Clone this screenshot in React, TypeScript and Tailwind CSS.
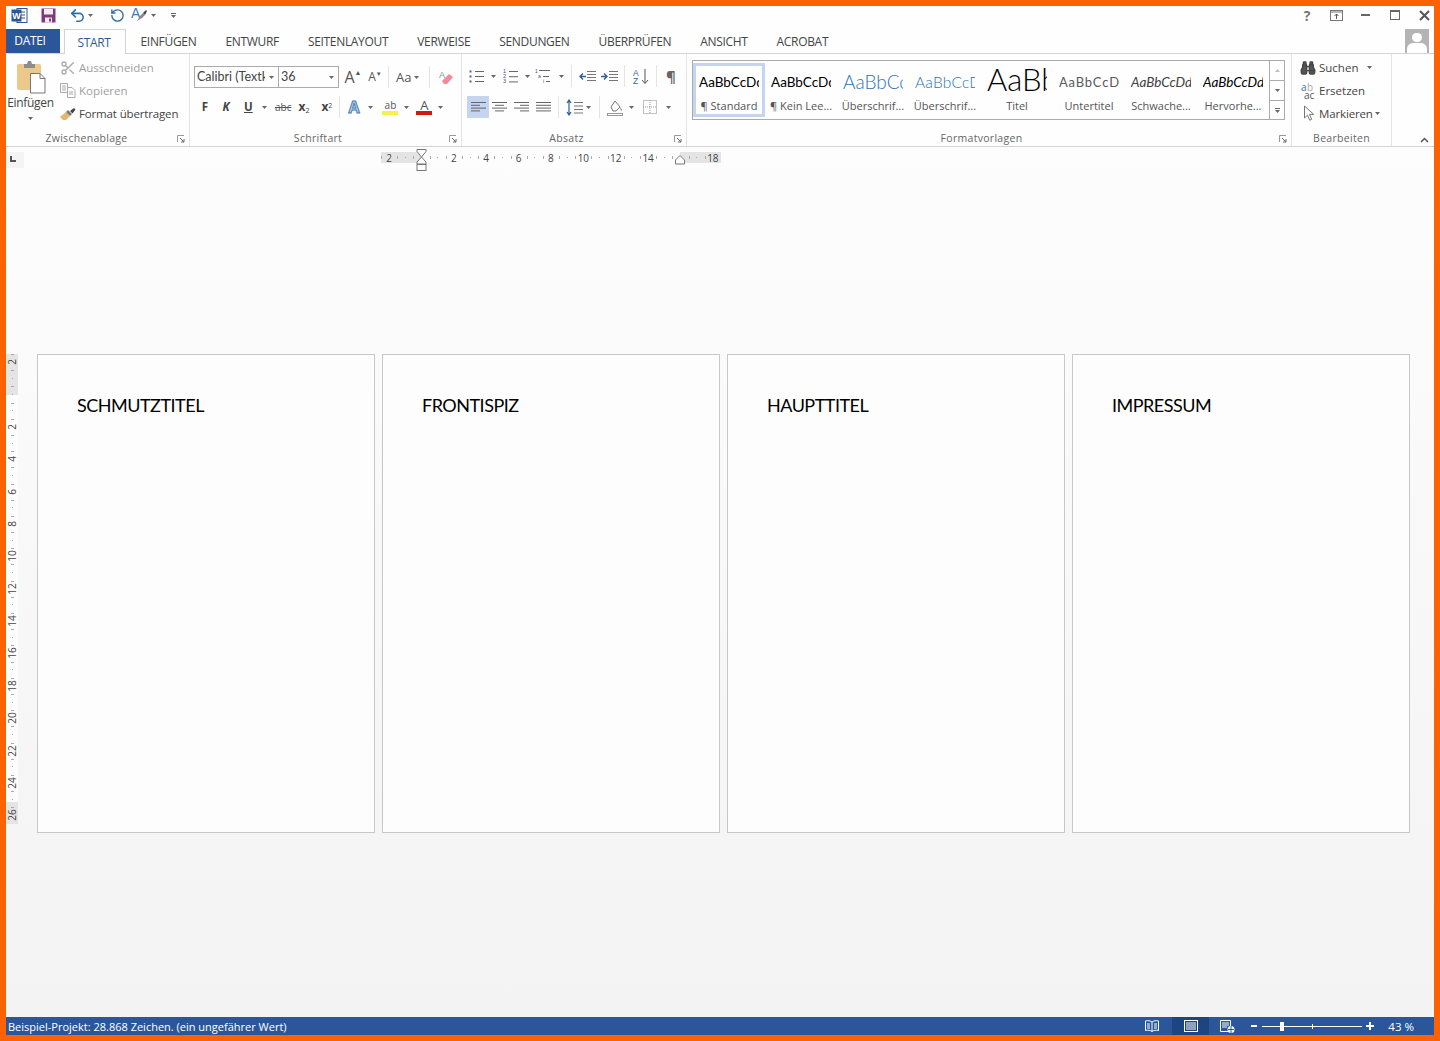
import type { ReactNode } from 'react';
import { Binoculars, RotateCw, Scissors, Undo2 } from 'lucide-react';

function Caret({ className = '' }: { className?: string }) {
  return (
    <svg width="5" height="3" viewBox="0 0 5 3" className={`shrink-0 ${className}`}>
      <path d="M0 0h5L2.5 3z" fill="#666" />
    </svg>
  );
}

function Divider({ className = '' }: { className?: string }) {
  return <div className={`h-[22px] w-px shrink-0 bg-[#e4e4e4] ${className}`} />;
}

function Launcher() {
  return (
    <svg width="8" height="8" viewBox="0 0 8 8" className="shrink-0">
      <path d="M0.5 7V0.5H7" fill="none" stroke="#999" />
      <path d="M3 3l4 4M7 4v3H4" fill="none" stroke="#666" />
    </svg>
  );
}

function Lines({ rows }: { rows: [number, number][] }) {
  return (
    <svg width="15" height="13" viewBox="0 0 15 13" className="shrink-0">
      {rows.map(([x, w], i) => (
        <rect key={i} x={x} y={1 + i * 2.8} width={w} height="1" fill="#666" />
      ))}
    </svg>
  );
}

function WordLogo() {
  return (
    <svg width="17" height="17" viewBox="0 0 17 17">
      <rect x="6" y="1.5" width="10" height="14" fill="#fff" stroke="#2b579a" />
      <path d="M9 5h5M9 8h5M9 11h5" stroke="#2b579a" />
      <rect x="0.5" y="2.5" width="10" height="12" fill="#2b579a" />
      <text x="5.5" y="12" textAnchor="middle" fontSize="9" fontWeight="700" fill="#fff" fontFamily="Liberation Sans, sans-serif">W</text>
    </svg>
  );
}

function SaveIcon() {
  return (
    <svg width="15" height="15" viewBox="0 0 15 15">
      <rect x="0.5" y="0.5" width="14" height="14" fill="#80397b" />
      <rect x="3" y="1" width="9" height="5.5" fill="#f4eef4" />
      <rect x="4" y="9.5" width="7" height="5" fill="#f4eef4" />
      <rect x="8" y="10.5" width="2" height="3" fill="#80397b" />
    </svg>
  );
}

function FormatPainterQat() {
  return (
    <svg width="17" height="18" viewBox="0 0 17 18">
      <text x="0" y="12" fontSize="14" fill="#3f7cb8" fontFamily="Liberation Sans, sans-serif">A</text>
      <path d="M6 15l3-5 3-3 2 2-3 3z" fill="#8a8a8a" />
      <path d="M12 7l3-3 1 1-2 4z" fill="#444" />
    </svg>
  );
}

function RestoreRibbon() {
  return (
    <svg width="13" height="11" viewBox="0 0 13 11">
      <rect x=".5" y=".5" width="12" height="10" fill="none" stroke="#777" />
      <path d="M1 2h11" stroke="#777" />
      <path d="M6.500 9V4M4.500 6l2-2 2 2" fill="none" stroke="#555" />
    </svg>
  );
}

function PasteIcon() {
  return (
    <svg width="30" height="34" viewBox="0 0 30 34">
      <path d="M1 6a2 2 0 0 1 2-2h20a2 2 0 0 1 2 2v24H3a2 2 0 0 1-2-2z" fill="#ebc98a" />
      <path d="M8 4h3l1-3h3l1 3h3v4H8z" fill="#8c8c8c" />
      <path d="M14.5 13.5H24l5 5v14.5H14.5z" fill="#fff" stroke="#777" />
      <path d="M24 13.5v5h5" fill="none" stroke="#777" />
    </svg>
  );
}

function CopyIcon() {
  return (
    <svg width="16" height="15" viewBox="0 0 16 15">
      <path d="M0.5 0.5h7v9h-7zM2 3h4M2 5h4M2 7h4" fill="#fff" stroke="#aaa" />
      <path d="M7.5 4.5H12l3 3v7H7.5zM9 9h4M9 11h4" fill="#fff" stroke="#aaa" />
    </svg>
  );
}

function BrushIcon() {
  return (
    <svg width="16" height="14" viewBox="0 0 16 14">
      <path d="M0 10l6-5 4 4-4 4H3z" fill="#e3b868" />
      <path d="M6 5l2-2 4 4-2 2z" fill="#777" />
      <path d="M10 4l4-3 1.5 1.5-3 4z" fill="#444" />
    </svg>
  );
}

function EraserIcon() {
  return (
    <svg width="16" height="16" viewBox="0 0 16 16">
      <text x="1" y="9" fontSize="9" fill="#7a8fb0" fontFamily="Liberation Sans, sans-serif">A</text>
      <path d="M4 12l7-7 4 3-6 7H6z" fill="#f08a9c" />
    </svg>
  );
}

function BulletsIcon() {
  return (
    <svg width="15" height="15" viewBox="0 0 15 15">
      {[2, 7, 12].map((y) => (
        <g key={y}>
          <rect x="0.5" y={y - 0.5} width="2" height="2" fill="#4a648f" />
          <rect x="6" y={y} width="9" height="1" fill="#666" />
        </g>
      ))}
    </svg>
  );
}

function NumberedIcon() {
  return (
    <svg width="16" height="16" viewBox="0 0 16 16">
      {['1', '2', '3'].map((n, i) => (
        <g key={n}>
          <text x="0" y={5 + i * 5.2} fontSize="5.5" fill="#39537f" fontFamily="Liberation Sans, sans-serif">{n}</text>
          <rect x="6" y={3 + i * 5.2} width="9" height="1" fill="#666" />
        </g>
      ))}
    </svg>
  );
}

function MultiIcon() {
  return (
    <svg width="16" height="16" viewBox="0 0 16 16">
      <text x="0" y="5" fontSize="5" fill="#39537f" fontFamily="Liberation Sans, sans-serif">1</text>
      <rect x="4" y="2" width="11" height="1" fill="#666" />
      <text x="3" y="10" fontSize="5" fill="#39537f" fontFamily="Liberation Sans, sans-serif">a</text>
      <rect x="8" y="8" width="6" height="1" fill="#666" />
      <text x="8" y="15" fontSize="5" fill="#39537f" fontFamily="Liberation Sans, sans-serif">i</text>
      <rect x="11" y="13" width="4" height="1" fill="#666" />
    </svg>
  );
}

function IndentIcon({ flip = false }: { flip?: boolean }) {
  return (
    <svg width="17" height="11" viewBox="0 0 17 11">
      <path d="M8 0.5h9M8 3.5h9M8 6.5h9M8 9.5h9" stroke="#777" />
      {flip ? (
        <path d="M0 5.5h5M3 2.5l3 3-3 3" fill="none" stroke="#2b5f9a" strokeWidth="1.4" />
      ) : (
        <path d="M7 5.5H1M4 2.5l-3 3 3 3" fill="none" stroke="#2b5f9a" strokeWidth="1.4" />
      )}
    </svg>
  );
}

function SortIcon() {
  return (
    <svg width="16" height="17" viewBox="0 0 16 17">
      <text x="0" y="7.5" fontSize="8.5" fill="#39649c" fontFamily="Liberation Sans, sans-serif">A</text>
      <text x="0" y="16" fontSize="8.5" fill="#39649c" fontFamily="Liberation Sans, sans-serif">Z</text>
      <path d="M12 1v14M9 12l3 3.5 3-3.5" fill="none" stroke="#555" />
    </svg>
  );
}

function LineSpacingIcon() {
  return (
    <svg width="17" height="17" viewBox="0 0 17 17">
      <path d="M3 1v15M1 4l2-3 2 3M1 13l2 3 2-3" fill="none" stroke="#2b5f9a" strokeWidth="1.2" />
      <path d="M8 3.5h9M8 7h9M8 10.5h9M8 14h9" stroke="#777" />
    </svg>
  );
}

function ShadingIcon() {
  return (
    <svg width="17" height="17" viewBox="0 0 17 17">
      <path d="M4 8l4-6 5 6-4 4H6z" fill="#fff" stroke="#777" />
      <path d="M13 8l2 3-1 1z" fill="#2b7cb8" />
      <rect x="0.5" y="14.5" width="15" height="2" fill="#fff" stroke="#999" />
    </svg>
  );
}

function BordersIcon() {
  return (
    <svg width="14" height="14" viewBox="0 0 14 14">
      <rect x="0.5" y="0.5" width="13" height="13" fill="none" stroke="#888" strokeDasharray="1 1" />
      <path d="M7 0v14M0 7h14" stroke="#999" strokeDasharray="1 1" />
    </svg>
  );
}

function ReplaceIcon() {
  return (
    <svg width="16" height="16" viewBox="0 0 16 16" fontFamily="Open Sans, sans-serif" fontSize="10">
      <text x="1" y="8" fill="#3d6fa8">a</text>
      <text x="7" y="8" fill="#aaa">b</text>
      <text x="4" y="16" fill="#555">ac</text>
    </svg>
  );
}

function SelectIcon() {
  return (
    <svg width="13" height="17" viewBox="0 0 13 17">
      <path d="M1.500 1v12l3-2.800 2.200 5 2-.9-2.200-4.900h4.200z" fill="#fff" stroke="#777" />
    </svg>
  );
}

function RulerMarkers() {
  return (
    <svg width="12" height="23" viewBox="0 0 12 23" className="absolute top-[-3px] left-[35px]">
      <path d="M1 .5h9v2L5.5 8 1 2.5z" fill="#fff" stroke="#777" />
      <path d="M5.5 8L10 13v2H1v-2z" fill="#fff" stroke="#777" />
      <rect x="1" y="15.5" width="9" height="6" fill="#fff" stroke="#777" />
    </svg>
  );
}

function RightIndent() {
  return (
    <svg width="10" height="10" viewBox="0 0 10 10" className="absolute top-[3px] left-[294px]">
      <path d="M.5 5L5 .5 9.5 5v4h-9z" fill="#fff" stroke="#777" />
    </svg>
  );
}

const hCells = [-2, -1, 0, 1, 2, 3, 4, 5, 6, 7, 8, 9, 10, 11, 12, 13, 14, 15, 16, 17, 18];
const vCells = Array.from({ length: 29 }, (_, i) => i - 2);

function HorizontalRuler() {
  return (
    <div className="relative ml-[357px] flex h-[11px] w-[340px] bg-[linear-gradient(to_right,#e4e4e4_40px,#fdfdfd_40px,#fdfdfd_299px,#e4e4e4_299px)]">
      {hCells.map((n) => (
        <div key={n} className="flex h-full w-[16.2px] items-center justify-between">
          <span className="h-[3px] w-px bg-[#aaa]" />
          {n % 2 === 0 && n !== 0 && n !== 16 ? (
            <span className="text-[10px] leading-none text-[#444]">{Math.abs(n)}</span>
          ) : (
            <span className="h-[1px] w-px bg-[#aaa]" />
          )}
          <span className="w-px" />
        </div>
      ))}
      <RulerMarkers />
      <RightIndent />
    </div>
  );
}

function VerticalRuler() {
  return (
    <div className="flex h-[470px] w-[12px] shrink-0 flex-col bg-[linear-gradient(to_bottom,#e4e4e4_41px,#fdfdfd_41px,#fdfdfd_448px,#e4e4e4_448px)]">
      {vCells.map((n) => (
        <div key={n} className="flex h-[16.2px] w-full flex-col items-center justify-between">
          <span className="h-px w-[3px] bg-[#aaa]" />
          {n % 2 === 0 && n !== 0 ? (
            <span className="-rotate-90 text-[10px] leading-none text-[#444]">{Math.abs(n)}</span>
          ) : (
            <span className="h-px w-px bg-[#aaa]" />
          )}
          <span className="h-px" />
        </div>
      ))}
    </div>
  );
}

function Page({ title }: { title: string }) {
  return (
    <div className="h-[479px] w-[338px] shrink-0 border border-[#c8c8c8] bg-[#fdfdfd] pt-[38px] pl-[39px]">
      <p className="font-['Lato',sans-serif] text-[18px] leading-[24px] tracking-[-0.5px] text-black">{title}</p>
    </div>
  );
}

function StyleItem({
  label,
  selected = false,
  children,
}: {
  label: string;
  selected?: boolean;
  children: ReactNode;
}) {
  return (
    <div
      className={`flex h-[54px] w-[72px] shrink-0 flex-col items-center ${
        selected ? 'border-[3px] border-[#c5d4ef]' : 'border-[3px] border-transparent'
      }`}
    >
      <div className="flex h-[33px] w-[60px] items-center overflow-hidden whitespace-nowrap font-['Lato',sans-serif]">
        {children}
      </div>
      <span className="text-[11px] leading-[14px] whitespace-nowrap text-[#555]">{label}</span>
    </div>
  );
}

function GroupLabel({
  children,
  launcher = true,
  className = '',
  textClass = '',
}: {
  children: ReactNode;
  launcher?: boolean;
  className?: string;
  textClass?: string;
}) {
  return (
    <div className={`mt-[1px] flex h-[15px] items-center text-[10.5px] tracking-[0.3px] text-[#666] ${className}`}>
      <span className={`flex-1 text-center ${textClass}`}>{children}</span>
      {launcher && <Launcher />}
    </div>
  );
}

const tabs = ['EINFÜGEN', 'ENTWURF', 'SEITENLAYOUT', 'VERWEISE', 'SENDUNGEN', 'ÜBERPRÜFEN', 'ANSICHT', 'ACROBAT'];

export default function App() {
  return (
    <div className="flex h-[1041px] w-[1440px] flex-col overflow-hidden bg-[#fd6200] p-[6px] font-['Open_Sans',sans-serif]">
      {/* title bar */}
      <div className="flex h-[22px] shrink-0 items-center bg-[#fefefe] pb-[4px] pl-[5px]">
        <WordLogo />
        <div className="ml-[13px]"><SaveIcon /></div>
        <Undo2 size={17} strokeWidth={2.2} className="ml-[13px] text-[#2f6ea5]" />
        <Caret className="ml-[2px]" />
        <RotateCw size={15} strokeWidth={2.2} className="ml-[17px] -scale-x-100 text-[#2f6ea5]" />
        <div className="ml-[6px]"><FormatPainterQat /></div>
        <Caret className="ml-[3px]" />
        <div className="ml-[15px] flex flex-col items-center gap-[1px]">
          <span className="h-px w-[5px] bg-[#666]" />
          <Caret />
        </div>
        <div className="ml-auto flex items-center pr-[4px]">
          <span className="w-[20px] text-center text-[14px] font-bold text-[#777]">?</span>
          <div className="ml-[13px]"><RestoreRibbon /></div>
          <div className="ml-[18px] h-[2px] w-[9px] bg-[#666]" />
          <div className="ml-[20px] h-[10px] w-[10px] border border-t-2 border-[#666]" />
          <svg width="11" height="11" viewBox="0 0 11 11" className="ml-[19px]">
            <path d="M1 1l9 9M10 1l-9 9" stroke="#555" strokeWidth="2" />
          </svg>
        </div>
      </div>

      {/* tabs */}
      <div className="flex h-[26px] shrink-0 items-stretch border-b border-[#d4d4d4] bg-[#fefefe] text-[12px] tracking-[-0.32px] text-[#444]">
        <div className="mt-[1px] flex w-[54px] items-center justify-center bg-[#2b579a] pr-[6px] text-white">DATEI</div>
        <div className="mt-[1px] mb-[-1px] ml-[4px] flex w-[62px] items-center justify-center border-x border-t border-[#d4d4d4] bg-[#fefefe] pt-[1px] pr-[2px] text-[#35588f]">START</div>
        {tabs.map((t) => (
          <div key={t} className="flex items-center px-[14.5px] pt-[2px]">{t}</div>
        ))}
        <div className="mt-[1px] mr-[5px] ml-auto flex h-[24px] w-[24px] flex-col items-center overflow-hidden bg-[#b4b4b4]">
          <span className="mt-[4px] h-[10px] w-[10px] rounded-full bg-white" />
          <span className="mt-[1px] h-[12px] w-[20px] rounded-t-[6px] bg-white" />
        </div>
      </div>

      {/* ribbon */}
      <div className="flex h-[93px] shrink-0 border-b border-[#d4d4d4] bg-[#fefefe] text-[11.5px] text-[#444]">
        {/* Zwischenablage */}
        <div className="flex w-[184px] shrink-0 flex-col border-r border-[#e4e4e4]">
          <div className="flex h-[77px]">
            <div className="flex w-[49px] flex-col items-center pt-[6px]">
              <PasteIcon />
              <span className="text-[12px] leading-[18px] tracking-[-0.3px]">Einfügen</span>
              <Caret className="mt-[5px]" />
            </div>
            <div className="ml-[5px] flex flex-col pt-[2px]">
              <div className="flex h-[23px] items-center gap-[3px] text-[#a0a0a0]">
                <Scissors size={16} className="text-[#aaa]" />
                <span>Ausschneiden</span>
              </div>
              <div className="flex h-[23px] items-center gap-[3px] text-[#a0a0a0]">
                <CopyIcon />
                <span>Kopieren</span>
              </div>
              <div className="flex h-[23px] items-center gap-[3px] tracking-[-0.15px] whitespace-nowrap">
                <BrushIcon />
                <span>Format übertragen</span>
              </div>
            </div>
          </div>
          <GroupLabel className="pr-[4px]" textClass="pr-[10px]">Zwischenablage</GroupLabel>
        </div>

        {/* Schriftart */}
        <div className="flex w-[272px] shrink-0 flex-col border-r border-[#e4e4e4]">
          <div className="flex h-[77px] flex-col pl-[4px]">
            <div className="mt-[12px] flex h-[22px] items-center">
              <div className="flex h-[22px] w-[85px] items-center border border-[#ababab] pl-[2px]">
                <span className="w-[68px] overflow-hidden font-['Lato',sans-serif] text-[12.5px] whitespace-nowrap">Calibri (Textkörper)</span>
                <Caret className="ml-[4px]" />
              </div>
              <div className="ml-[-1px] flex h-[22px] w-[61px] items-center border border-[#ababab] pl-[2px]">
                <span className="flex-1 font-['Lato',sans-serif] text-[12.5px]">36</span>
                <Caret className="mr-[4px]" />
              </div>
              <span className="ml-[4px] flex w-[20px] items-start justify-center text-[16px] leading-none text-[#555]">A<span className="text-[7px]">▲</span></span>
              <span className="ml-[2px] flex w-[20px] items-start justify-center text-[12px] leading-none text-[#555]">A<span className="text-[6px]">▼</span></span>
              <Divider className="ml-[3px]" />
              <span className="ml-[7px] text-[13px] leading-none text-[#555]">Aa</span>
              <Caret className="ml-[3px]" />
              <Divider className="ml-[10px]" />
              <div className="ml-[8px]"><EraserIcon /></div>
            </div>
            <div className="mt-[8px] flex h-[22px] items-center text-[#444]">
              <span className="ml-[7px] w-[8px] text-center text-[11.5px] font-bold">F</span>
              <span className="ml-[13px] w-[8px] text-center text-[11.5px] font-bold italic">K</span>
              <span className="ml-[14px] w-[8px] text-center text-[11.5px] font-bold underline">U</span>
              <Caret className="ml-[10px]" />
              <span className="ml-[8px] text-[10px] text-[#555] line-through">abc</span>
              <span className="ml-[7px] text-[12px] font-bold">x<sub className="text-[7px] font-normal">2</sub></span>
              <span className="ml-[12px] text-[12px] font-bold">x<sup className="text-[7px] font-normal">2</sup></span>
              <Divider className="ml-[7px]" />
              <span className="ml-[8px] text-[16px] leading-none font-bold text-[#b9d3ee] [-webkit-text-stroke:1px_#4a7fb5]">A</span>
              <Caret className="ml-[9px]" />
              <div className="ml-[9px] flex w-[16px] flex-col items-center">
                <span className="text-[10px] leading-[11px] text-[#555]">ab</span>
                <span className="h-[4px] w-[16px] bg-[#f7ef4a]" />
              </div>
              <Caret className="ml-[6px]" />
              <div className="ml-[7px] flex w-[16px] flex-col items-center">
                <span className="text-[13px] leading-[12px] text-[#555]">A</span>
                <span className="h-[4px] w-[16px] bg-[#d01818]" />
              </div>
              <Caret className="ml-[6px]" />
            </div>
          </div>
          <GroupLabel className="pr-[4px]" textClass="pr-[3px]">Schriftart</GroupLabel>
        </div>

        {/* Absatz */}
        <div className="flex w-[225px] shrink-0 flex-col border-r border-[#e4e4e4]">
          <div className="flex h-[77px] flex-col pl-[4px]">
            <div className="mt-[11px] flex h-[22px] items-center">
              <div className="ml-[3px]"><BulletsIcon /></div>
              <Caret className="ml-[7px]" />
              <div className="ml-[7px]"><NumberedIcon /></div>
              <Caret className="ml-[6px]" />
              <div className="ml-[5px]"><MultiIcon /></div>
              <Caret className="ml-[8px]" />
              <Divider className="ml-[7px]" />
              <div className="ml-[7px]"><IndentIcon /></div>
              <div className="ml-[5px]"><IndentIcon flip /></div>
              <Divider className="ml-[6px]" />
              <div className="ml-[8px]"><SortIcon /></div>
              <Divider className="ml-[7px]" />
              <span className="ml-[9px] text-[15px] leading-none font-bold text-[#666]">¶</span>
            </div>
            <div className="mt-[9px] flex h-[22px] items-center">
              <div className="ml-[1px] flex h-[22px] w-[22px] items-center justify-center bg-[#c5d4ef]">
                <Lines rows={[[0, 15], [0, 9], [0, 15], [0, 9]]} />
              </div>
              <div className="ml-[3px]"><Lines rows={[[0, 15], [3, 9], [0, 15], [3, 9]]} /></div>
              <div className="ml-[7px]"><Lines rows={[[0, 15], [6, 9], [0, 15], [6, 9]]} /></div>
              <div className="ml-[7px]"><Lines rows={[[0, 15], [0, 15], [0, 15], [0, 15]]} /></div>
              <Divider className="ml-[7px]" />
              <div className="ml-[7px]"><LineSpacingIcon /></div>
              <Caret className="ml-[3px]" />
              <Divider className="ml-[8px]" />
              <div className="ml-[7px]"><ShadingIcon /></div>
              <Caret className="ml-[5px]" />
              <div className="ml-[9px]"><BordersIcon /></div>
              <Caret className="ml-[9px]" />
            </div>
          </div>
          <GroupLabel className="pr-[4px]" textClass="pr-[3px]">Absatz</GroupLabel>
        </div>

        {/* Formatvorlagen */}
        <div className="flex w-[605px] shrink-0 flex-col border-r border-[#e4e4e4]">
          <div className="flex h-[77px] items-start pt-[6px] pl-[5px]">
            <div className="flex h-[60px] w-[593px] items-center border border-[#ababab]">
              <StyleItem label="¶ Standard" selected>
                <span className="text-[13.5px] text-black">AaBbCcDdEe</span>
              </StyleItem>
              <StyleItem label="¶ Kein Lee...">
                <span className="text-[13.5px] text-black">AaBbCcDdEe</span>
              </StyleItem>
              <StyleItem label="Überschrif...">
                <span className="text-[19px] font-light text-[#2e74b5]">AaBbCcDd</span>
              </StyleItem>
              <StyleItem label="Überschrif...">
                <span className="text-[15.5px] font-light tracking-[0.2px] text-[#2e74b5]">AaBbCcDdE</span>
              </StyleItem>
              <StyleItem label="Titel">
                <span className="mb-[6px] text-[31px] leading-none font-light text-black">AaBb</span>
              </StyleItem>
              <StyleItem label="Untertitel">
                <span className="text-[13px] tracking-[0.8px] text-[#5a5a5a]">AaBbCcDdE</span>
              </StyleItem>
              <StyleItem label="Schwache...">
                <span className="text-[13.5px] text-[#404040] italic">AaBbCcDdEe</span>
              </StyleItem>
              <StyleItem label="Hervorhe...">
                <span className="text-[13.5px] text-black italic">AaBbCcDdEe</span>
              </StyleItem>
              <div className="flex h-full w-[15px] flex-col border-l border-[#ababab]">
                <div className="flex h-[20px] items-center justify-center border-b border-[#ababab]"><Caret className="rotate-180 opacity-40" /></div>
                <div className="flex h-[20px] items-center justify-center border-b border-[#ababab]"><Caret /></div>
                <div className="flex flex-1 flex-col items-center justify-center gap-[1px]">
                  <span className="h-px w-[5px] bg-[#666]" />
                  <Caret />
                </div>
              </div>
            </div>
          </div>
          <GroupLabel className="pr-[4px]" textClass="pr-[3px]">Formatvorlagen</GroupLabel>
        </div>

        {/* Bearbeiten */}
        <div className="flex w-[100px] shrink-0 flex-col border-r border-[#e4e4e4]">
          <div className="flex h-[77px] flex-col pt-[2px] pl-[8px] whitespace-nowrap">
            <div className="flex h-[23px] items-center">
              <Binoculars size={16} className="fill-[#555] text-[#444]" />
              <span className="ml-[3px]">Suchen</span>
              <Caret className="ml-[9px]" />
            </div>
            <div className="flex h-[23px] items-center">
              <ReplaceIcon />
              <span className="ml-[3px]">Ersetzen</span>
            </div>
            <div className="flex h-[23px] items-center tracking-[-0.15px]">
              <div className="ml-[3px] w-[13px]"><SelectIcon /></div>
              <span className="ml-[3px]">Markieren</span>
              <Caret className="ml-[2px]" />
            </div>
          </div>
          <GroupLabel launcher={false}>Bearbeiten</GroupLabel>
        </div>

        <div className="flex flex-1 items-end justify-end pr-[5px] pb-[3px]">
          <svg width="9" height="6" viewBox="0 0 9 6">
            <path d="M1 5l3.5-3.5L8 5" fill="none" stroke="#555" strokeWidth="1.5" />
          </svg>
        </div>
      </div>

      {/* document */}
      <div className="flex min-h-0 flex-1 flex-col bg-gradient-to-b from-[#fdfdfd] to-[#f3f3f4]">
        <div className="flex h-[207px] shrink-0 items-start pt-[5px]">
          <div className="flex h-[16px] w-[18px] shrink-0 items-center justify-center bg-[#f4f4f4] pr-[4px] pb-[3px]">
            <span className="h-[6px] w-[6px] border-b-2 border-l-2 border-[#555]" />
          </div>
          <HorizontalRuler />
        </div>
        <div className="flex items-start">
          <VerticalRuler />
          <div className="ml-[19px] flex gap-[7px]">
            <Page title="SCHMUTZTITEL" />
            <Page title="FRONTISPIZ" />
            <Page title="HAUPTTITEL" />
            <Page title="IMPRESSUM" />
          </div>
        </div>
      </div>

      {/* status bar */}
      <div className="flex h-[18px] shrink-0 items-center bg-[#2b579a] pl-[2px] text-[11px] text-white">
        <span className="pt-[2px]">Beispiel-Projekt: 28.868 Zeichen. (ein ungefährer Wert)</span>
        <div className="ml-auto flex h-full items-center">
          <svg width="14" height="12" viewBox="0 0 14 12">
            <path d="M7 2C5 .5 3 .5 .5 1v9.5c2.500-.5 4.500-.5 6.500 1 2-1.500 4-1.500 6.500-1V1C11 .5 9 .5 7 2zM7 2v9.500" fill="none" stroke="#fff" />
            <path d="M2 4h3M2 6h3M2 8h3M9 4h3M9 6h3M9 8h3" stroke="#fff" />
          </svg>
          <div className="ml-[13px] flex h-full w-[37px] items-center justify-center bg-[#1f4580]">
            <svg width="14" height="12" viewBox="0 0 14 12">
              <rect x=".5" y=".5" width="13" height="11" fill="none" stroke="#fff" />
              <path d="M2 3h10M2 5h10M2 7h10M2 9h10" stroke="#fff" />
            </svg>
          </div>
          <svg width="15" height="13" viewBox="0 0 15 13" className="ml-[11px]">
            <path d="M.5.5h10v11H.5zM2 3h7M2 5h7M2 7h5" fill="none" stroke="#fff" />
            <circle cx="11" cy="9.500" r="3.500" fill="#fff" />
            <path d="M8 9.500h6M11 6v7" stroke="#2b579a" />
          </svg>
          <span className="ml-[16px] h-[2px] w-[6px] bg-white" />
          <div className="relative ml-[5px] flex h-[9px] w-[100px] items-center">
            <span className="h-px w-full bg-white" />
            <span className="absolute top-0 left-[18px] h-[9px] w-[4px] bg-white" />
            <span className="absolute top-[2px] left-[50px] h-[5px] w-px bg-white" />
          </div>
          <span className="relative ml-[4px] flex h-[8px] w-[8px] items-center justify-center">
            <span className="h-[2px] w-[8px] bg-white" />
            <span className="absolute h-[8px] w-[2px] bg-white" />
          </span>
          <span className="w-[60px] pt-[2px] pr-[20px] text-right text-[11.5px]">43 %</span>
        </div>
      </div>
    </div>
  );
}
